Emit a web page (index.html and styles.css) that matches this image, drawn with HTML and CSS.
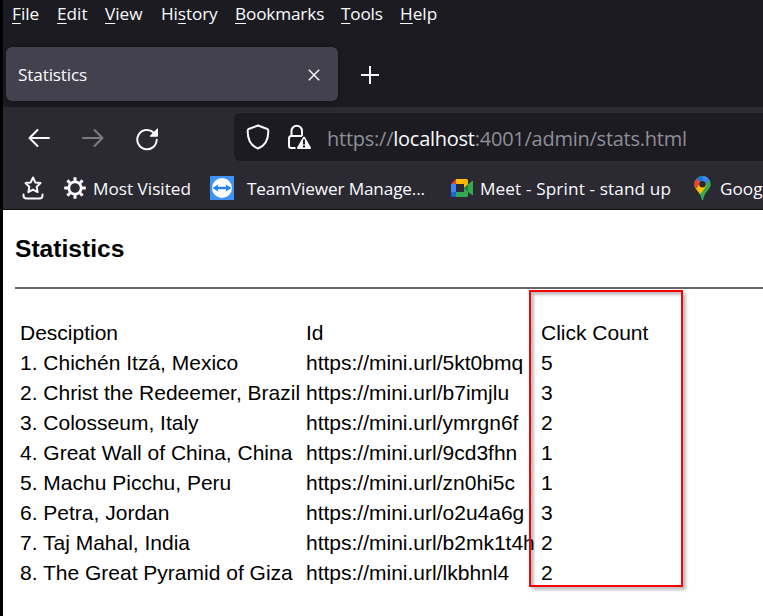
FILE: index.html
```html
<!DOCTYPE html>
<html lang="en">
<head>
<meta charset="utf-8">
<title>Statistics</title>
<link rel="stylesheet" href="styles.css">
</head>
<body>
<div class="window">
  <nav class="menubar">
    <span class="m-file"><u>F</u>ile</span><span class="m-edit"><u>E</u>dit</span><span class="m-view"><u>V</u>iew</span><span class="m-history">Hi<u>s</u>tory</span><span class="m-bookmarks"><u>B</u>ookmarks</span><span class="m-tools"><u>T</u>ools</span><span class="m-help"><u>H</u>elp</span>
  </nav>
  <div class="tabs">
    <div class="tab"><span>Statistics</span>
      <svg width="12" height="12" viewBox="0 0 12 12"><path d="M.8.8l10.4 10.4M11.2.8L.8 11.2" stroke="#fbfbfe" stroke-width="1.4" fill="none"/></svg>
    </div>
    <svg class="plus" width="18" height="18" viewBox="0 0 18 18"><path d="M9 0v18M0 9h18" stroke="#fbfbfe" stroke-width="2" fill="none"/></svg>
  </div>
  <div class="toolbar">
    <svg class="back" width="22" height="20" viewBox="0 0 22 20" fill="none" stroke="#fbfbfe" stroke-width="2" stroke-linecap="round" stroke-linejoin="round"><path d="M21 10H1.5M9.5 2l-8 8 8 8"/></svg>
    <svg class="forward" width="22" height="20" viewBox="0 0 22 20" fill="none" stroke="#7c7b82" stroke-width="2" stroke-linecap="round" stroke-linejoin="round"><path d="M1 10h19.5M12.500 2l8 8-8 8"/></svg>
    <svg class="reload" width="24" height="24" viewBox="0 0 24 24"><path d="M18.500 5.400A9.700 9.700 0 1 0 21.700 12.800" fill="none" stroke="#fbfbfe" stroke-width="2" stroke-linecap="round"/><path d="M22.500 1.800v7.400h-7.400z" fill="#fbfbfe" stroke="#fbfbfe" stroke-linejoin="round"/></svg>
    <div class="urlbar">
      <svg class="shield" width="24" height="26" viewBox="0 0 24 26"><path d="M12 1.500L21.300 5q1 .4 1 1.500C22.500 14 19.500 21.500 12 24.500 4.500 21.500 1.500 14 1.700 6.500q0-1.100 1-1.500z" fill="none" stroke="#fbfbfe" stroke-width="2" stroke-linejoin="round"/></svg>
      <svg class="lock" width="24" height="26" viewBox="0 0 24 26"><path d="M8.500 24H4.300Q2 24 2 21.500v-7Q2 12 4.300 12H15M4.500 12V7a5 5 0 0 1 10.500 0v5" fill="none" stroke="#fbfbfe" stroke-width="2"/><path d="M17 13.500L23 24H11z" fill="#fbfbfe" stroke="#fbfbfe" stroke-width="2" stroke-linejoin="round"/><path d="M17 15.500v5M17 21.500v2" stroke="#1c1b22" stroke-width="2"/></svg>
      <span class="url">https://<b>localhost</b>:4001/admin/stats.html</span>
    </div>
  </div>
  <div class="bookmarks">
    <svg class="star" width="22" height="24" viewBox="0 0 22 24" fill="none" stroke="#fbfbfe" stroke-width="2" stroke-linejoin="round" stroke-linecap="round"><path d="M11 1.500l2.300 4.900 5.200.7-3.800 3.700.9 5.300-4.600-2.500-4.600 2.500.9-5.300-3.800-3.700 5.200-.7zM1.500 18.500v1q0 3 3 3h13q3 0 3-3v-1"/></svg>
    <svg class="gear" width="22" height="22" viewBox="-11 -11 22 22" fill="none" stroke="#fbfbfe"><circle r="6.200" stroke-width="2.800"/><g stroke-width="3"><path d="M0-10.800V-7M0 10.800V7M-10.800 0H-7M10.800 0H7M-7.600-7.600L-5-5M7.600 7.600L5 5M-7.600 7.600L-5 5M7.600-7.600L5-5"/></g></svg>
    <span class="b-most">Most Visited</span>
    <svg class="tv" width="24" height="24" viewBox="0 0 24 24"><path fill="#3d94f6" d="M0 0h24v24H0z"/><circle cx="12" cy="12" r="10" fill="#fff"/><path d="M2.500 12l6-3.800-.8 2.600h8.600l-.8-2.600 6 3.800-6 3.800.8-2.600H7.700l.8 2.600z" fill="#2583ed"/></svg>
    <span class="b-tv">TeamViewer Manage...</span>
    <svg class="meet" width="22" height="18" viewBox="0 0 22 18"><path fill="#ffba00" d="M5 0h10.500Q17 0 17 1.500V9h-4V5H5z"/><path fill="#ea4335" d="M5 0v5H0z"/><path fill="#4285f4" d="M0 5h5v8H0z"/><path fill="#1967d2" d="M0 13h5v5H1.500Q0 18 0 16.500z"/><path fill="#34a853" d="M5 13h8V9l8-7q1-.7 1 .5v13q0 1.200-1 .5l-4-3v3.500q0 1.500-1.500 1.500H5z"/><path fill="#188038" d="M13 9l4-3.500v7z"/></svg>
    <span class="b-meet">Meet - Sprint - stand up</span>
    <svg class="pin" width="17" height="24" viewBox="0 0 17 24"><defs><clipPath id="pin"><path d="M8.500 0A8.300 8.300 0 0 0 .2 8.300c0 5.200 6.600 7.700 7.300 14.700.1 1.300 1.900 1.300 2 0 .7-7 7.300-9.500 7.300-14.700A8.300 8.300 0 0 0 8.500 0z"/></clipPath></defs><g clip-path="url(#pin)"><path fill="#34a853" d="M0 0h17v24H0z"/><path fill="#fbbc04" d="M0 11l6-4 7 2-5 7-4 4z"/><path fill="#ea4335" d="M0 1l7 5-5 7-3-4z"/><path fill="#4285f4" d="M7 0h9l-1 4-5 6-4-4z"/><path fill="#1a73e8" d="M2 2L8 7l1-7z"/></g><circle cx="8.500" cy="8.300" r="3.200" fill="#2b2a33"/></svg>
    <span class="b-goog">Goog</span>
  </div>
  <main class="page">
    <h1>Statistics</h1>
    <hr>
    <div class="table-wrap">
      <table>
        <tr><td>Desciption</td><td>Id</td><td>Click Count</td></tr>
        <tr><td>1. Chichén Itzá, Mexico</td><td>https://mini.url/5kt0bmq</td><td>5</td></tr>
        <tr><td>2. Christ the Redeemer, Brazil</td><td>https://mini.url/b7imjlu</td><td>3</td></tr>
        <tr><td>3. Colosseum, Italy</td><td>https://mini.url/ymrgn6f</td><td>2</td></tr>
        <tr><td>4. Great Wall of China, China</td><td>https://mini.url/9cd3fhn</td><td>1</td></tr>
        <tr><td>5. Machu Picchu, Peru</td><td>https://mini.url/zn0hi5c</td><td>1</td></tr>
        <tr><td>6. Petra, Jordan</td><td>https://mini.url/o2u4a6g</td><td>3</td></tr>
        <tr><td>7. Taj Mahal, India</td><td>https://mini.url/b2mk1t4h</td><td>2</td></tr>
        <tr><td>8. The Great Pyramid of Giza</td><td>https://mini.url/lkbhnl4</td><td>2</td></tr>
      </table>
      <div class="highlight"></div>
    </div>
  </main>
</div>
</body>
</html>
```
FILE: styles.css
```css
* { box-sizing: border-box; }
body { margin: 0; background: #000; overflow: hidden; }
.window {
  margin-left: 3px;
  width: 760px;
  height: 616px;
  overflow: hidden;
  background: #1c1b22;
  color: #fbfbfe;
  font: 17.2px/24px "Open Sans", "Noto Sans", sans-serif;
  white-space: nowrap;
}
svg { display: block; flex: none; }
span { flex: none; }
.menubar { display: flex; height: 28px; padding: 2px 0 0 9px; }
.menubar u { text-underline-offset: 3px; text-decoration-thickness: 1px; }
.m-file { width: 45px; }
.m-edit { width: 48px; }
.m-view { width: 56px; }
.m-history { width: 74px; letter-spacing: -.1px; }
.m-bookmarks { width: 106px; letter-spacing: -.15px; }
.m-tools { width: 59px; letter-spacing: -.2px; }
.tabs { display: flex; align-items: center; height: 79px; padding: 14px 0 0 3px; }
.tab {
  display: flex;
  align-items: center;
  justify-content: space-between;
  width: 332px;
  height: 54px;
  margin-bottom: 1px;
  padding: 1px 18px 0 12px;
  border-radius: 6px;
  background: #42414d;
  box-shadow: 0 0 4px rgba(0, 0, 0, .5);
  letter-spacing: -.15px;
}
.plus { margin-left: 23px; margin-top: 1px; }
.toolbar { display: flex; align-items: center; height: 60px; padding: 0 0 0 25px; background: #2b2a33; }
.back { margin-top: 2px; }
.forward { margin: 2px 0 0 32px; }
.reload { margin: 3px 0 0 31px; }
.urlbar {
  display: flex;
  align-items: center;
  flex: 1;
  height: 48px;
  margin-left: 75px;
  padding-left: 12px;
  border-radius: 6px 0 0 6px;
  background: #1c1b22;
}
.lock { margin-left: 17px; }
.url { margin: 3px 0 0 16px; font-size: 20px; letter-spacing: -.25px; color: #8f8f98; }
.url b { font-weight: 400; color: #fbfbfe; }
.bookmarks { display: flex; align-items: center; height: 43px; padding: 0 0 0 19px; background: #2b2a33; border-bottom: 1px solid #0c0c0d; }
.gear { margin-left: 20px; }
.b-most { width: 117px; margin: 1px 0 0 7px; }
.b-tv { width: 204px; margin: 1px 0 0 13px; letter-spacing: -.15px; }
.b-meet { width: 214px; margin: 1px 0 0 7px; letter-spacing: .12px; }
.b-goog { margin: 1px 0 0 9px; }
.page {
  height: 406px;
  padding: 24px 0 0 12px;
  background: #fff;
  color: #000;
  font: 21px/30px "Liberation Sans", Arial, sans-serif;
}
h1 { margin: 0; font-size: 24.600px; line-height: 30px; }
hr { height: 2px; margin: 23px 0 0; border: 0; background: #66666a; }
.table-wrap { position: relative; padding: 29px 0 0 5px; }
table { border-collapse: collapse; table-layout: fixed; width: 671px; }
td { width: 150px; padding: 0; }
td:first-child { width: 286px; }
td:nth-child(2) { width: 235px; }
.highlight {
  position: absolute;
  left: 514px;
  top: 1px;
  width: 154px;
  height: 297px;
  border: 2px solid #f80000;
  box-shadow: 3px 3px 3px rgba(0, 0, 0, .25), inset 3px 3px 3px rgba(0, 0, 0, .25);
}
```
